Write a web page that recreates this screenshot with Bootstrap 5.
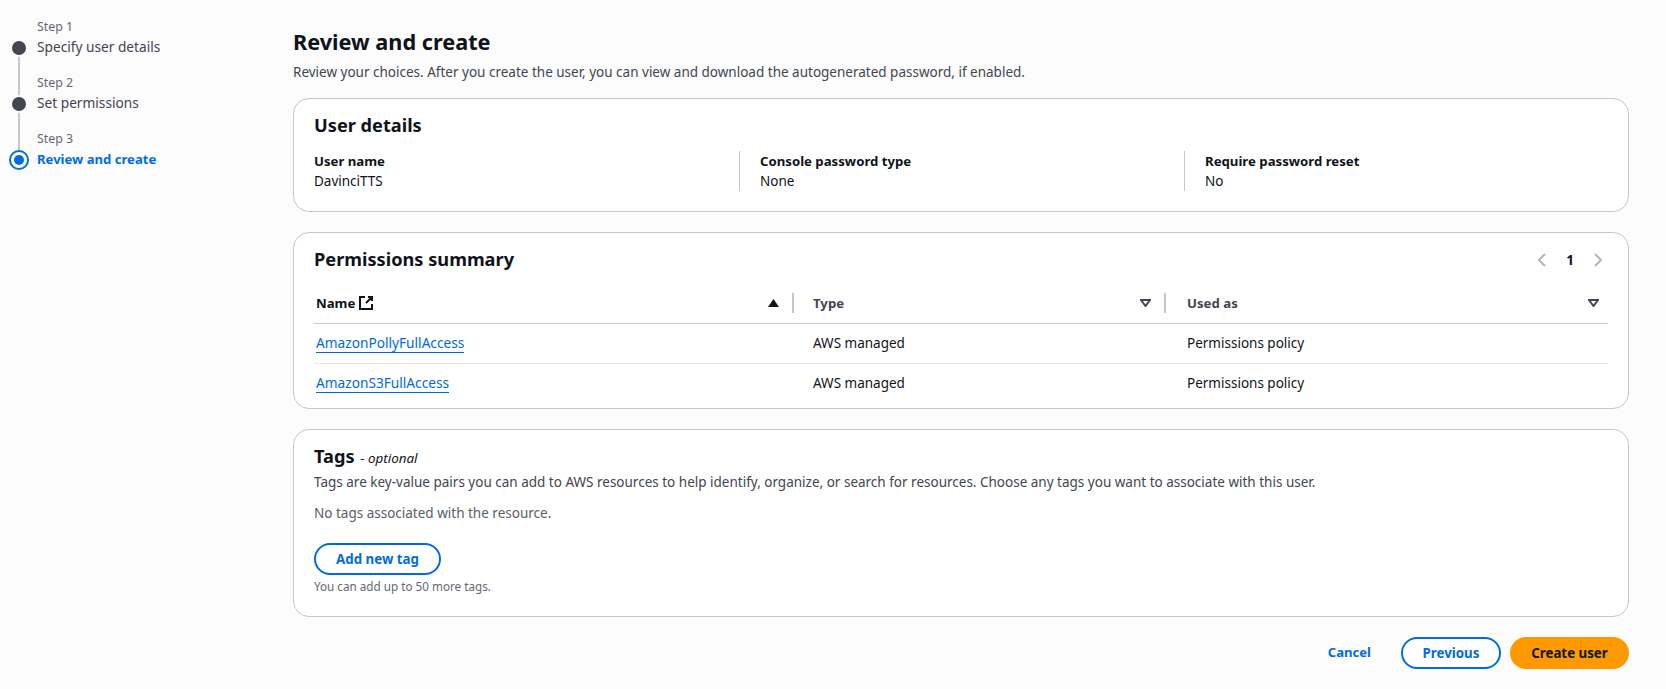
<!DOCTYPE html>
<html lang="en"><head><meta charset="utf-8"><title>Review and create</title>
<link rel="stylesheet" href="https://cdn.jsdelivr.net/npm/bootstrap@5.3.0/dist/css/bootstrap.min.css">
<style>
html,body{height:100%}
body{background:#fcfcfd;font-family:"Noto Sans","Open Sans",sans-serif;font-size:13.5px;line-height:20px;color:#0f141a;overflow:hidden}
.sidenav{width:293px;flex:none;padding-top:17px}
.stp{display:flex;height:56px;padding-left:9px}
.stp-rail{width:28px;flex:none;position:relative}
.stp-dot{position:absolute;left:3px;top:24px;width:14px;height:14px;border-radius:50%;background:#424650}
.stp-line{position:absolute;left:9px;top:40px;width:2px;height:38px;background:#c6c6cd}
.stp-cur{position:absolute;left:0;top:21px;width:20px;height:20px;border-radius:50%;border:2px solid #006ce0;background:#fff;display:flex;align-items:center;justify-content:center}
.stp-cur::after{content:"";width:10px;height:10px;border-radius:50%;background:#006ce0}
.stp-no{font-size:12.4px;line-height:20px;color:#656871}
.stp-name{font-size:13.7px;line-height:20px;color:#424650}
.stp-name.on{color:#006ce0;font-weight:700;font-size:13.1px}
.mainc{flex:1;padding-right:37px;padding-top:28px;min-width:0}
.pg-title{font-size:21.7px;line-height:28px;font-weight:700;margin:0}
.pg-sub{color:#424650;margin:6px 0 16px}
.pane{background:#fff;border:1px solid #c6c6cd;border-radius:16px;padding:15px 20px 0;margin-bottom:20px}
.pane-h{font-size:18.2px;line-height:22px;font-weight:700;margin:0 0 2px}
.pane-user{height:114px}
.kv{flex:none;width:445px;height:40px;border-right:1px solid #c6c6cd;margin-top:13px;padding-left:20px}
.kv:first-child{width:426px;padding-left:0}
.kv:last-child{border:0;flex:1}
.kv b{display:block;font-size:13.2px;font-weight:700}
.kv span{display:block;color:#0f141a}
.pane-perm{height:177px}
.pager{font-weight:700;gap:20px;margin-right:6px}
.perm-tb{table-layout:fixed;width:100%;margin:21px 0 0;--bs-table-bg:transparent;font-size:13.5px}
.perm-tb th{padding:0 0 10px;border-bottom:1px solid #c6c6cd;font-weight:700;font-size:13.2px}
.perm-tb td{padding:0 0 2px;height:40px;vertical-align:middle;border-bottom:1px solid #e8e8ec;color:#0f141a}
.perm-tb tr:last-child td{border-bottom:0}
.col-a{width:480px}
.col-b{width:372px}
.th-in{height:20px;display:flex;align-items:center;justify-content:space-between;color:#424650}
.th-in.sep{border-right:2px solid #c6c6cd;padding-right:13px}
.th-in.last{padding-right:9px}
.th-first{color:#0f141a;padding-left:2px}
.pl-c{padding-left:19px!important}
.pl-d{padding-left:21px!important}
.plink{color:#006ce0;text-decoration:none;border-bottom:1px solid #006ce0;margin-left:2px;display:inline-block;line-height:19px;font-size:13.7px}
.pane-tags{height:188px}
.opt{font-style:italic;font-weight:400;font-size:13.4px;line-height:1;margin-left:1px}
.tg-d{color:#424650;margin:5px 0 0}
.tg-e{color:#5a5e68;margin:11px 0 0}
.tg-n{font-size:11.7px;line-height:16px;color:#656871;margin:3px 0 0}
.pill{border-radius:20px;font-weight:700;font-size:13.3px;line-height:18px;border:2px solid #006ce0;color:#006ce0;background:#fff;padding:5px 0;height:32px;white-space:nowrap;--bs-btn-hover-color:#006ce0}
.btn-add{margin-top:20px;display:block;width:127px}
.btn-prev{width:100px}
.btn-prim{background:#ff9900;border-color:#ff9900;color:#0f141a;width:119px}
.btn-cancel{color:#006ce0;font-weight:700;font-size:13.1px;padding:0;border:0;background:none;margin-right:21px}
.act{gap:9px}
</style></head><body>
<div class="d-flex">
<nav class="sidenav">
 <div class="stp"><div class="stp-rail"><span class="stp-dot"></span><span class="stp-line"></span></div><div><div class="stp-no">Step 1</div><div class="stp-name">Specify user details</div></div></div>
 <div class="stp"><div class="stp-rail"><span class="stp-dot"></span><span class="stp-line"></span></div><div><div class="stp-no">Step 2</div><div class="stp-name">Set permissions</div></div></div>
 <div class="stp"><div class="stp-rail"><span class="stp-cur"></span></div><div><div class="stp-no">Step 3</div><div class="stp-name on">Review and create</div></div></div>
</nav>
<main class="mainc">
 <h1 class="pg-title">Review and create</h1>
 <p class="pg-sub">Review your choices. After you create the user, you can view and download the autogenerated password, if enabled.</p>
 <section class="pane pane-user">
  <h2 class="pane-h">User details</h2>
  <div class="d-flex">
   <div class="kv"><b>User name</b><span>DavinciTTS</span></div>
   <div class="kv"><b>Console password type</b><span>None</span></div>
   <div class="kv"><b>Require password reset</b><span>No</span></div>
  </div>
 </section>
 <section class="pane pane-perm">
  <div class="d-flex justify-content-between align-items-center">
   <h2 class="pane-h">Permissions summary</h2>
   <div class="d-flex align-items-center pager">
    <svg width="8" height="14" viewBox="0 0 8 14"><path d="M7 1 1 7l6 6" fill="none" stroke="#b4b4bb" stroke-width="2"/></svg>
    <span>1</span>
    <svg width="8" height="14" viewBox="0 0 8 14"><path d="m1 1 6 6-6 6" fill="none" stroke="#b4b4bb" stroke-width="2"/></svg>
   </div>
  </div>
  <table class="table perm-tb">
   <colgroup><col class="col-a"><col class="col-b"><col></colgroup>
   <thead><tr>
    <th><div class="th-in sep th-first"><span class="d-flex align-items-center gap-1">Name
     <svg width="14" height="14" viewBox="0 0 14 14"><path d="M6 1H1v12h12V8M9 1h4v4M13 1 7 7" fill="none" stroke="#0f141a" stroke-width="2"/></svg></span>
     <svg width="11" height="8" viewBox="0 0 11 8"><path d="M5.500 0 11 8H0z" fill="#0f141a"/></svg></div></th>
    <th class="pl-c"><div class="th-in sep"><span>Type</span><svg width="11" height="8" viewBox="0 0 11 8"><path d="M1 1h9L5.500 7z" fill="none" stroke="#424650" stroke-width="2"/></svg></div></th>
    <th class="pl-d"><div class="th-in last"><span>Used as</span><svg width="11" height="8" viewBox="0 0 11 8"><path d="M1 1h9L5.500 7z" fill="none" stroke="#424650" stroke-width="2"/></svg></div></th>
   </tr></thead>
   <tbody>
    <tr><td><a class="plink" href="#">AmazonPollyFullAccess</a></td><td class="pl-c">AWS managed</td><td class="pl-d">Permissions policy</td></tr>
    <tr><td><a class="plink" href="#">AmazonS3FullAccess</a></td><td class="pl-c">AWS managed</td><td class="pl-d">Permissions policy</td></tr>
   </tbody>
  </table>
 </section>
 <section class="pane pane-tags">
  <h2 class="pane-h">Tags <span class="opt">- optional</span></h2>
  <p class="tg-d">Tags are key-value pairs you can add to AWS resources to help identify, organize, or search for resources. Choose any tags you want to associate with this user.</p>
  <p class="tg-e">No tags associated with the resource.</p>
  <button class="btn pill btn-add" type="button">Add new tag</button>
  <p class="tg-n">You can add up to 50 more tags.</p>
 </section>
 <div class="d-flex justify-content-end align-items-center act">
  <button class="btn btn-cancel" type="button">Cancel</button>
  <button class="btn pill btn-prev" type="button">Previous</button>
  <button class="btn pill btn-prim" type="button">Create user</button>
 </div>
</main>
</div>
<script src="https://cdn.jsdelivr.net/npm/bootstrap@5.3.0/dist/js/bootstrap.bundle.min.js"></script>
</body></html>
